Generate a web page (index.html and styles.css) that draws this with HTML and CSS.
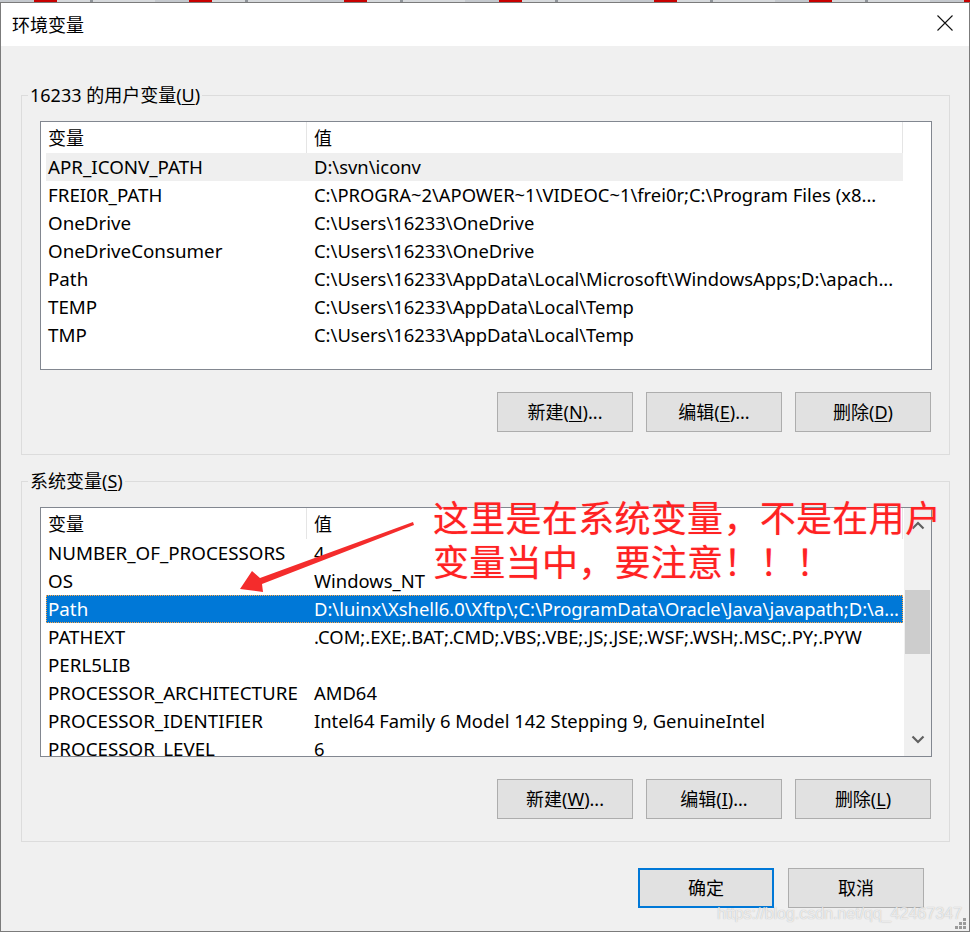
FILE: index.html
```html
<!DOCTYPE html>
<html lang="zh-CN">
<head>
<meta charset="utf-8">
<title>环境变量</title>
<link rel="stylesheet" href="styles.css">
</head>
<body>
<div class="strip"></div>
<div class="window">
  <div class="titlebar">
    <span class="title">环境变量</span>
    <svg class="close" width="16" height="16" viewBox="0 0 16 16"><path d="M0.5 0.5 L15.5 15.5 M15.5 0.5 L0.5 15.5" stroke="#111" stroke-width="1.1" fill="none"/></svg>
  </div>
  <div class="content">
    <fieldset class="group">
      <legend>16233 的用户变量(<u>U</u>)</legend>
      <div class="list">
        <div class="table">
          <div class="header"><div class="h1">变量</div><div class="h2">值</div></div>
          <div class="row hover"><div class="c1">APR_ICONV_PATH</div><div class="c2">D:\svn\iconv</div></div>
          <div class="row"><div class="c1">FREI0R_PATH</div><div class="c2">C:\PROGRA~2\APOWER~1\VIDEOC~1\frei0r;C:\Program Files (x8...</div></div>
          <div class="row"><div class="c1">OneDrive</div><div class="c2">C:\Users\16233\OneDrive</div></div>
          <div class="row"><div class="c1">OneDriveConsumer</div><div class="c2">C:\Users\16233\OneDrive</div></div>
          <div class="row"><div class="c1">Path</div><div class="c2">C:\Users\16233\AppData\Local\Microsoft\WindowsApps;D:\apach...</div></div>
          <div class="row"><div class="c1">TEMP</div><div class="c2">C:\Users\16233\AppData\Local\Temp</div></div>
          <div class="row"><div class="c1">TMP</div><div class="c2">C:\Users\16233\AppData\Local\Temp</div></div>
        </div>
        <div class="sb-space"></div>
      </div>
      <div class="buttons">
        <button class="btn">新建(<u>N</u>)...</button>
        <button class="btn">编辑(<u>E</u>)...</button>
        <button class="btn">删除(<u>D</u>)</button>
      </div>
    </fieldset>

    <fieldset class="group group2">
      <legend>系统变量(<u>S</u>)</legend>
      <div class="list">
        <div class="table">
          <div class="header"><div class="h1">变量</div><div class="h2">值</div></div>
          <div class="row"><div class="c1">NUMBER_OF_PROCESSORS</div><div class="c2">4</div></div>
          <div class="row"><div class="c1">OS</div><div class="c2">Windows_NT</div></div>
          <div class="row selected"><div class="c1">Path</div><div class="c2">D:\luinx\Xshell6.0\Xftp\;C:\ProgramData\Oracle\Java\javapath;D:\a...</div></div>
          <div class="row"><div class="c1">PATHEXT</div><div class="c2">.COM;.EXE;.BAT;.CMD;.VBS;.VBE;.JS;.JSE;.WSF;.WSH;.MSC;.PY;.PYW</div></div>
          <div class="row"><div class="c1">PERL5LIB</div><div class="c2"></div></div>
          <div class="row"><div class="c1">PROCESSOR_ARCHITECTURE</div><div class="c2">AMD64</div></div>
          <div class="row"><div class="c1">PROCESSOR_IDENTIFIER</div><div class="c2">Intel64 Family 6 Model 142 Stepping 9, GenuineIntel</div></div>
          <div class="row"><div class="c1">PROCESSOR_LEVEL</div><div class="c2">6</div></div>
        </div>
        <div class="scrollbar">
          <div class="sb-btn"><svg width="14" height="9" viewBox="0 0 14 9"><path d="M1.5 7.5 L7 2 L12.5 7.5" stroke="#606060" stroke-width="2.2" fill="none"/></svg></div>
          <div class="sb-track"><div class="sb-thumb"></div></div>
          <div class="sb-btn"><svg width="14" height="9" viewBox="0 0 14 9"><path d="M1.5 1.5 L7 7 L12.5 1.5" stroke="#606060" stroke-width="2.2" fill="none"/></svg></div>
        </div>
      </div>
      <div class="buttons">
        <button class="btn">新建(<u>W</u>)...</button>
        <button class="btn">编辑(<u>I</u>)...</button>
        <button class="btn">删除(<u>L</u>)</button>
      </div>
    </fieldset>

    <div class="dialog-buttons">
      <button class="btn default">确定</button>
      <button class="btn">取消</button>
    </div>
  </div>

  <div class="note">这里是在系统变量，不是在用户<br>变量当中，要注意！！！</div>
  <svg class="arrow" width="970" height="932" viewBox="0 0 970 932">
    <polygon points="413,522 260,578 252,571 240,589 263,592 262,584 414,525" fill="#f42c2c"/>
  </svg>
  <div class="watermark">https://blog.csdn.net/qq_42467347</div>
  <svg class="grip" width="12" height="12" viewBox="0 0 12 12">
    <rect x="9" y="1" width="3" height="3" fill="#9a9a9a"/>
    <rect x="5" y="5" width="3" height="3" fill="#9a9a9a"/>
    <rect x="9" y="5" width="3" height="3" fill="#9a9a9a"/>
    <rect x="1" y="9" width="3" height="3" fill="#9a9a9a"/>
    <rect x="5" y="9" width="3" height="3" fill="#9a9a9a"/>
    <rect x="9" y="9" width="3" height="3" fill="#9a9a9a"/>
  </svg>
</div>
</body>
</html>
```

FILE: styles.css
```css
* { box-sizing: border-box; }
html, body { margin: 0; padding: 0; }
body {
  width: 970px;
  height: 932px;
  overflow: hidden;
  background: #c4c8cd;
  font-family: "Noto Sans", "Noto Sans CJK SC", sans-serif;
  font-size: 18px;
  color: #000;
}
.strip {
  height: 2px;
  background: repeating-linear-gradient(90deg, #c4c8cd 0 34px, #c80000 34px 57px, #d6d9dc 57px 90px, #8e9398 90px 93px, #d6d9dc 93px 155px);
}
.window {
  position: relative;
  width: 970px;
  height: 930px;
  border: 1px solid #7b7b7b;
  background: #f0f0f0;
}
.titlebar {
  height: 43px;
  background: #fff;
  display: flex;
  align-items: center;
  justify-content: space-between;
  padding: 0 16px 0 11px;
}
.title {
  font-family: "Noto Sans CJK SC", sans-serif;
  font-size: 18px;
  line-height: 24px;
  margin-top: -2px;
}
.close { display: block; margin-top: -3px; }

.content { display: flex; flex-direction: column; }

.group {
  margin: 37px 19px 0 20px;
  padding: 14px 17px 22px 18px;
  border: 1px solid #dcdcdc;
  min-width: 0;
}
.group2 { margin-top: 14px; }
.group legend {
  padding: 0 2px;
  margin-left: -12px;
  line-height: 24px;
  font-size: 18px;
}
u { text-decoration: underline; text-underline-offset: 2px; }

.list {
  height: 249px;
  border: 1px solid #828790;
  background: #fff;
  display: flex;
  overflow: hidden;
}
.group2 .list { height: 250px; }
.table { width: 862px; flex: none; }
.sb-space { flex: 1; }
.header {
  height: 31px;
  display: flex;
  line-height: 31px;
  font-family: "Noto Sans CJK SC", sans-serif;
}
.h1 {
  width: 266px;
  padding-left: 7px;
  border-right: 1px solid #e5e5e5;
}
.h2 {
  flex: 1;
  padding-left: 7px;
  border-right: 1px solid #e5e5e5;
}
.row {
  height: 28px;
  line-height: 28px;
  margin-left: 5px;
  display: flex;
  white-space: nowrap;
  font-size: 18.75px;
}
.row .c1 { width: 261px; padding-left: 2px; overflow: hidden; flex: none; }
.row .c2 { flex: 1; padding-left: 7px; overflow: hidden; font-size: 18.4px; }
.row.hover { background: #efefef; }
.row.selected {
  background: #0078d7;
  color: #fff;
  outline: 1px dotted #ffa84a;
  outline-offset: -1px;
}

.scrollbar {
  flex: 1;
  display: flex;
  flex-direction: column;
  background: #f0f0f0;
  margin-left: 1px;
}
.sb-btn {
  height: 34px;
  display: flex;
  align-items: center;
  justify-content: center;
  flex: none;
}
.sb-track { flex: 1; padding: 48px 1px 0 1px; }
.sb-thumb { height: 64px; background: #cdcdcd; }

.buttons {
  display: flex;
  justify-content: flex-end;
  gap: 13px;
  margin-top: 22px;
  padding-right: 1px;
}
.btn {
  width: 136px;
  height: 40px;
  border: 1px solid #adadad;
  background: #e1e1e1;
  font-family: "Noto Sans", "Noto Sans CJK SC", sans-serif;
  font-size: 18px;
  color: #000;
  padding: 0;
  line-height: 24px;
}
.dialog-buttons {
  display: flex;
  justify-content: flex-end;
  gap: 14px;
  margin-top: 26px;
  padding-right: 45px;
}
.btn.default { border: 2px solid #0078d7; }

.note {
  position: absolute;
  left: 432px;
  top: 491px;
  font-family: "Noto Sans CJK SC", sans-serif;
  font-size: 36px;
  line-height: 44px;
  letter-spacing: 0.3px;
  color: #ff2222;
  white-space: nowrap;
  text-shadow: 0 0 1px #ff9aa8;
}
.arrow {
  position: absolute;
  left: -1px;
  top: -3px;
  pointer-events: none;
}
.watermark {
  position: absolute;
  left: 716px;
  top: 901px;
  font-family: "Liberation Sans", sans-serif;
  font-size: 16.4px;
  letter-spacing: -0.2px;
  color: rgba(255, 255, 255, 0.72);
  text-shadow: 0 0 1px rgba(90, 90, 90, 0.45);
  white-space: nowrap;
}
.grip {
  position: absolute;
  right: 3px;
  bottom: 2px;
}
```
